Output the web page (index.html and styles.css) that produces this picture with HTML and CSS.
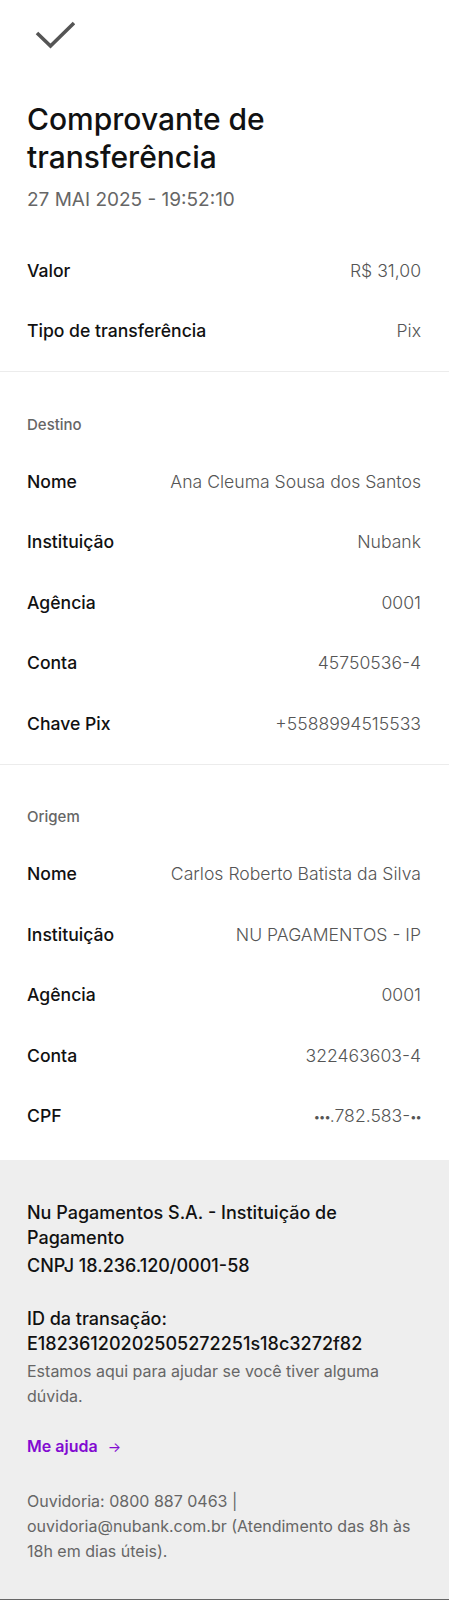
FILE: index.html
```html
<!DOCTYPE html>
<html lang="pt-BR">
<head>
<meta charset="utf-8">
<title>Comprovante de transferência</title>
<link rel="stylesheet" href="styles.css">
</head>
<body>
<div class="page">
  <header class="top">
    <svg class="check" width="40" height="30" viewBox="0 0 40 30" aria-hidden="true">
      <path d="M2 13 L15.5 26 L39 3" fill="none" stroke="#555" stroke-width="3.6"/>
    </svg>
  </header>
  <h1 class="title">Comprovante de transferência</h1>
  <div class="date">27 MAI 2025 - 19:52:10</div>

  <section class="section first">
    <div class="row"><span class="label">Valor</span><span class="value">R$ 31,00</span></div>
    <div class="row"><span class="label">Tipo de transferência</span><span class="value">Pix</span></div>
  </section>

  <section class="section">
    <h2 class="heading">Destino</h2>
    <div class="row"><span class="label">Nome</span><span class="value">Ana Cleuma Sousa dos Santos</span></div>
    <div class="row"><span class="label">Instituição</span><span class="value">Nubank</span></div>
    <div class="row"><span class="label">Agência</span><span class="value">0001</span></div>
    <div class="row"><span class="label">Conta</span><span class="value">45750536-4</span></div>
    <div class="row"><span class="label">Chave Pix</span><span class="value">+5588994515533</span></div>
  </section>

  <section class="section last">
    <h2 class="heading">Origem</h2>
    <div class="row"><span class="label">Nome</span><span class="value">Carlos Roberto Batista da Silva</span></div>
    <div class="row"><span class="label">Instituição</span><span class="value">NU PAGAMENTOS - IP</span></div>
    <div class="row"><span class="label">Agência</span><span class="value">0001</span></div>
    <div class="row"><span class="label">Conta</span><span class="value">322463603-4</span></div>
    <div class="row"><span class="label">CPF</span><span class="value"><span class="dots">•••</span>.782.583-<span class="dots">••</span></span></div>
  </section>

  <footer class="footer">
    <p class="strong">Nu Pagamentos S.A. - Instituição de Pagamento</p>
    <p class="strong cnpj">CNPJ 18.236.120/0001-58</p>
    <p class="strong txid">ID da transação:<br>E18236120202505272251s18c3272f82</p>
    <p class="muted help-text">Estamos aqui para ajudar se você tiver alguma dúvida.</p>
    <a class="help" href="#">Me ajuda <span class="arrow">→</span></a>
    <p class="muted ouv">Ouvidoria: 0800 887 0463 | ouvidoria@nubank.com.br (Atendimento das 8h às 18h em dias úteis).</p>
  </footer>
</div>
</body>
</html>
```

FILE: styles.css
```css
* { box-sizing: border-box; }
html, body { margin: 0; padding: 0; background: #fff; }
body {
  font-family: Inter, "Noto Sans", "Liberation Sans", sans-serif;
  color: #111;
  width: 449px;
}
.page { display: flex; flex-direction: column; min-height: 1600px; }

.top { padding: 20px 0 0 35px; height: 100px; }
.check { display: block; }

.title {
  margin: 0;
  padding: 0 27px;
  font-size: 30px;
  line-height: 38px;
  font-weight: 500;
  letter-spacing: 0;
  color: #111;
}
.date {
  padding: 0 27px;
  margin-top: 12px;
  font-size: 19px;
  line-height: 24px;
  color: #666;
  font-weight: 400;
}

.section { border-bottom: 1px solid #ececec; padding-bottom: 10px; }
.section.first { margin-top: 28px; }
.section.last { border-bottom: none; padding-bottom: 14px; }

.heading {
  margin: 0;
  padding: 42.5px 27px 16.5px;
  font-size: 15px;
  line-height: 20px;
  font-weight: 500;
  color: #666;
}

.row {
  height: 60.5px;
  padding: 0 28px 0 27px;
  display: flex;
  align-items: center;
  justify-content: space-between;
  gap: 16px;
  font-size: 17.6px;
}
.label { font-weight: 500; color: #111; white-space: nowrap; }
.value { color: #555; font-weight: 300; text-align: right; white-space: nowrap; }
.dots { font-size: 11px; letter-spacing: -0.8px; font-weight: 400; vertical-align: 1px; }

.footer {
  flex: 1;
  background: #eeeeee;
  padding: 40px 27px 30px;
  border-bottom: 1px solid #666;
}
.footer p { margin: 0; }
.footer .strong { font-size: 18px; line-height: 25px; font-weight: 500; color: #111; }
.footer .cnpj { margin-top: 3px; }
.footer .txid { margin-top: 28px; }
.footer .muted { font-size: 16px; line-height: 25px; color: #666; }
.footer .help-text { margin-top: 3px; padding-right: 30px; }
.help {
  display: inline-block;
  margin-top: 25px;
  font-size: 16px;
  line-height: 24px;
  font-weight: 600;
  color: #820ad1;
  text-decoration: none;
}
.arrow { font-weight: 400; margin-left: 6px; font-size: 14px; }
.footer .ouv { margin-top: 30px; padding-right: 0; }
```
